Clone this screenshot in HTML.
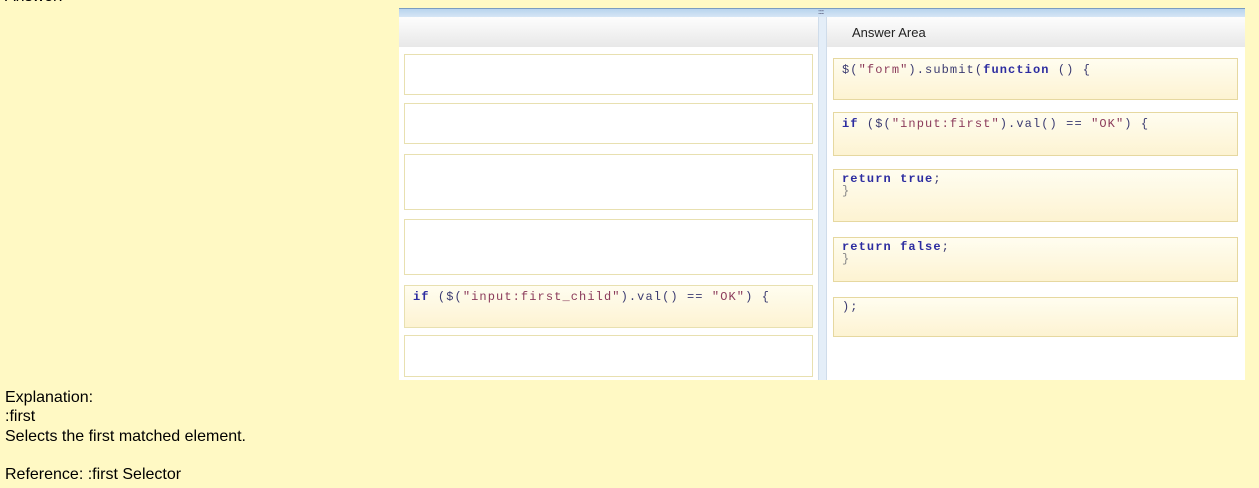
<!DOCTYPE html>
<html><head><style>
body{margin:0;width:1259px;height:488px;background:#fff9c4;font-family:"Liberation Sans",Arial,sans-serif;font-size:16px;color:#000;position:relative;overflow:hidden}
.a{position:absolute}
.panel{left:399px;top:8px;width:846px;height:372px;background:#fff}
.top{left:399px;top:8px;width:846px;height:8px;background:linear-gradient(#b8d4ee,#d6e6f5);border-top:1px solid #7a9cc0}
.hdr{top:17px;height:30px;background:linear-gradient(#fdfdfd,#e8e8e8)}
.lb{left:404px;width:407px;background:#fff;border:1px solid #e8e0b0}
.rb{left:833px;width:403px;border:1px solid #e6d8a0;background:linear-gradient(#fffdf0,#fdf3d2)}
.code{font-family:"Liberation Mono",monospace;font-size:12px;letter-spacing:1.1px;color:#3a3a70;padding:3px 8px;line-height:12px}
.s{color:#8b3a5a}
.k{color:#2c2ca0;font-weight:bold}
.t{position:absolute;left:5px;line-height:19px}
</style></head><body>
<div class="t" style="top:-13px">Answer:</div>
<div class="a panel"></div>
<div class="a top"></div>
<div class="a" style="left:818px;top:10px;font-size:6px;color:#446;letter-spacing:-1px">::::::::</div>
<div class="a hdr" style="left:399px;width:419px"></div>
<div class="a hdr" style="left:825px;width:420px"></div>
<div class="a" style="left:818px;top:17px;width:7px;height:363px;background:#e4eef8;border-left:1px solid #cfdcea;border-right:1px solid #cfdcea"></div>
<div class="a" style="left:852px;top:25px;font-size:13px;color:#222">Answer Area</div>
<div class="a lb" style="top:54px;height:39px"></div>
<div class="a lb" style="top:103px;height:39px"></div>
<div class="a lb" style="top:154px;height:54px"></div>
<div class="a lb" style="top:219px;height:54px"></div>
<div class="a lb code" style="top:285px;height:33px;width:391px;background:linear-gradient(#fffdf0,#fdf3d2);padding-top:5px"><span class="k">if</span> ($(<span class="s">"input:first_child"</span>).val() == <span class="s">"OK"</span>) {</div>
<div class="a lb" style="top:335px;height:40px"></div>
<div class="a rb code" style="top:58px;height:32px;width:387px;padding-top:5px">$(<span class="s">"form"</span>).submit(<span class="k">function</span> () {</div>
<div class="a rb code" style="top:112px;height:34px;width:387px;padding-top:5px"><span class="k">if</span> ($(<span class="s">"input:first"</span>).val() == <span class="s">"OK"</span>) {</div>
<div class="a rb code" style="top:169px;height:45px;width:387px"><span class="k">return true</span>;<br><span style="color:#888">}</span></div>
<div class="a rb code" style="top:237px;height:37px;width:387px"><span class="k">return false</span>;<br><span style="color:#888">}</span></div>
<div class="a rb code" style="top:297px;height:32px;width:387px">);</div>
<div class="t" style="top:388px">Explanation:</div>
<div class="t" style="top:407px">:first</div>
<div class="t" style="top:427px">Selects the first matched element.</div>
<div class="t" style="top:465px">Reference: :first Selector</div>
</body></html>
